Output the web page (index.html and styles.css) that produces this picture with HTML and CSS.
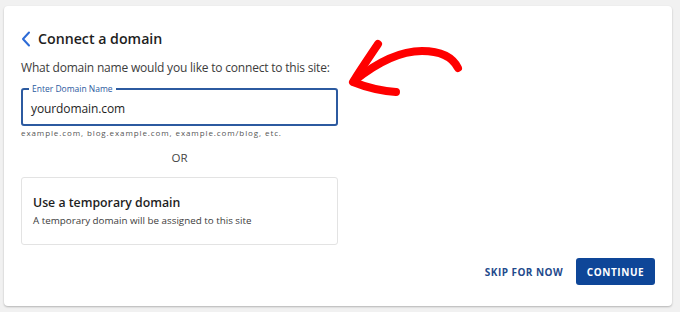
FILE: index.html
```html
<!DOCTYPE html>
<html>
<head>
<meta charset="utf-8">
<link rel="stylesheet" href="styles.css">
</head>
<body>
<div class="card">
  <div class="header">
    <svg class="back" width="10" height="16" viewBox="0 0 10 16"><path d="M8 1.5 L2 8 L8 14.5" fill="none" stroke="#2d6bd6" stroke-width="2" stroke-linecap="round" stroke-linejoin="round"/></svg>
    <h1 class="title">Connect a domain</h1>
  </div>
  <div class="main">
    <div class="form">
      <p class="question">What domain name would you like to connect to this site:</p>
      <div class="field">
        <span class="field-label">Enter Domain Name</span>
        <span class="field-value">yourdomain.com</span>
      </div>
      <p class="hint">example.com, blog.example.com, example.com/blog, etc.</p>
      <p class="or">OR</p>
      <div class="temp">
        <div class="temp-title">Use a temporary domain</div>
        <div class="temp-sub">A temporary domain will be assigned to this site</div>
      </div>
    </div>
    <svg class="arrow" width="130" height="70" viewBox="0 0 130 70">
      <path d="M118 32 C112 20 100 15 82 15 C62 15 40 24 14 45" fill="none" stroke="#ff0000" stroke-width="8" stroke-linecap="round"/>
      <path d="M38 8 C30 20 21 33 13 46 C28 52 42 55 56 56" fill="none" stroke="#ff0000" stroke-width="8" stroke-linecap="round" stroke-linejoin="round"/>
    </svg>
  </div>
  <div class="actions">
    <button class="btn-link">SKIP FOR NOW</button>
    <button class="btn-primary">CONTINUE</button>
  </div>
</div>
</body>
</html>
```
FILE: styles.css
```css
html, body {
  margin: 0;
  padding: 0;
}
body {
  background: #f1f1f1;
  font-family: "Open Sans", "Noto Sans", sans-serif;
  width: 680px;
  height: 312px;
  padding: 6px 8px 0 4px;
  box-sizing: border-box;
}
.card {
  background: #fff;
  border-radius: 4px;
  box-shadow: 0 1px 2px rgba(0,0,0,0.25);
  height: 300px;
  box-sizing: border-box;
  padding: 24px 17px 0 17px;
  display: flex;
  flex-direction: column;
}
.header {
  display: flex;
  align-items: center;
  gap: 7px;
  height: 18px;
}
.title {
  margin: 0;
  font-size: 14.2px;
  font-weight: 600;
  color: #1e1e1e;
  line-height: 18px;
}
.main {
  display: flex;
  align-items: flex-start;
}
.form {
  width: 317px;
  display: flex;
  flex-direction: column;
}
.question {
  margin: 11px 0 0;
  font-size: 12px;
  letter-spacing: -0.2px;
  color: #3c3c3c;
  line-height: 18px;
  white-space: nowrap;
}
.field {
  position: relative;
  margin-top: 11px;
  height: 38px;
  border: 2px solid #2c5aa0;
  border-radius: 3px;
  box-sizing: border-box;
  display: flex;
  align-items: center;
  padding: 2px 8px 0;
}
.field-label {
  position: absolute;
  left: 6px;
  top: -7px;
  background: #fff;
  padding: 0 3px;
  font-size: 8.5px;
  line-height: 11px;
  color: #2c5aa0;
}
.field-value {
  font-size: 12px;
  letter-spacing: -0.1px;
  color: #1e1e1e;
}
.hint {
  margin: 1px 0 0;
  font-size: 8px;
  letter-spacing: 0.9px;
  line-height: 12px;
  color: #555;
  white-space: nowrap;
}
.or {
  margin: 11px 0 0;
  text-align: center;
  font-size: 11.5px;
  line-height: 15px;
  color: #444;
}
.temp {
  margin-top: 12px;
  border: 1px solid #e3e3e3;
  border-radius: 3px;
  height: 68px;
  box-sizing: border-box;
  padding: 16px 11px 0;
}
.temp-title {
  font-size: 12.3px;
  font-weight: 600;
  color: #1e1e1e;
  line-height: 17px;
}
.temp-sub {
  margin-top: 3px;
  font-size: 9.8px;
  color: #3c3c3c;
  line-height: 14px;
}
.arrow {
  margin: -12px 0 0 2px;
}
.actions {
  margin-top: 13px;
  display: flex;
  justify-content: flex-end;
  align-items: center;
  gap: 13px;
}
.btn-link {
  background: none;
  border: none;
  font-family: inherit;
  font-size: 10px;
  font-weight: 700;
  letter-spacing: 0.45px;
  color: #1f4a8c;
  padding: 0;
}
.btn-primary {
  font-family: inherit;
  background: #0e4698;
  color: #fff;
  border: none;
  border-radius: 3px;
  font-size: 10px;
  font-weight: 700;
  letter-spacing: 0.6px;
  height: 27px;
  width: 79px;
  padding: 0;
}
```
